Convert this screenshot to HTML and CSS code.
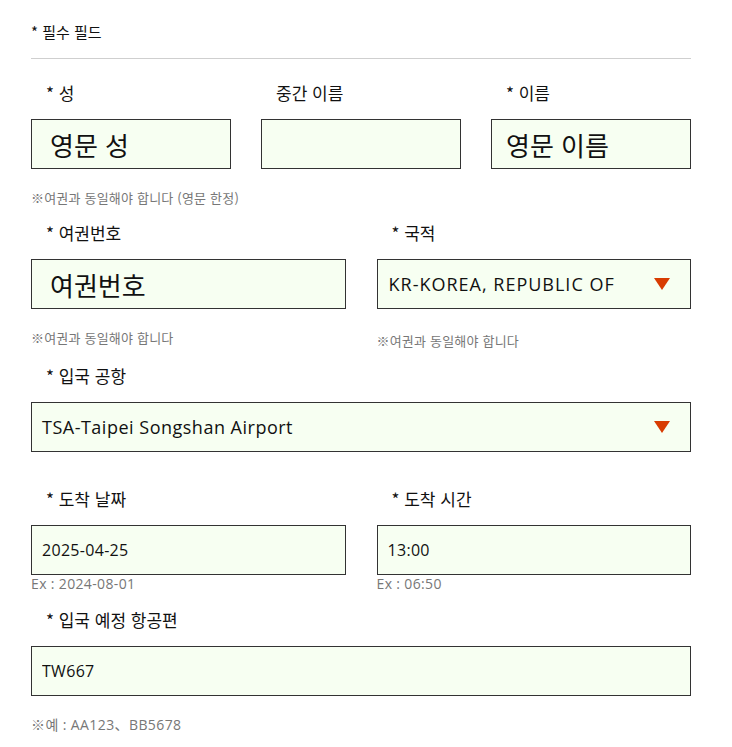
FILE: index.html
```html
<!DOCTYPE html>
<html lang="ko">
<head>
<meta charset="utf-8">
<link rel="stylesheet" href="styles.css">
</head>
<body>
<div class="form">
  <div class="required-note">* 필수 필드</div>
  <div class="divider"></div>

  <div class="row three">
    <div class="field">
      <div class="label">* 성</div>
      <input class="box big" type="text" placeholder="영문 성">
    </div>
    <div class="field">
      <div class="label">중간 이름</div>
      <input class="box big" type="text">
    </div>
    <div class="field">
      <div class="label">* 이름</div>
      <input class="box big tight" type="text" placeholder="영문 이름">
    </div>
  </div>
  <div class="hint">※여권과 동일해야 합니다 (영문 한정)</div>

  <div class="row two">
    <div class="field">
      <div class="label">* 여권번호</div>
      <input class="box big" type="text" placeholder="여권번호">
      <div class="hint">※여권과 동일해야 합니다</div>
    </div>
    <div class="field">
      <div class="label">* 국적</div>
      <div class="box select nat">
        <span>KR-KOREA, REPUBLIC OF</span>
        <svg class="arrow" width="16" height="12" viewBox="0 0 16 12"><path d="M0 0H16L8 12Z" fill="#d83c02"/></svg>
      </div>
      <div class="hint low">※여권과 동일해야 합니다</div>
    </div>
  </div>

  <div class="field">
    <div class="label">* 입국 공항</div>
    <div class="box select airport">
      <span>TSA-Taipei Songshan Airport</span>
      <svg class="arrow" width="16" height="12" viewBox="0 0 16 12"><path d="M0 0H16L8 12Z" fill="#d83c02"/></svg>
    </div>
  </div>

  <div class="row two spaced">
    <div class="field">
      <div class="label">* 도착 날짜</div>
      <input class="box small" type="text" value="2025-04-25">
      <div class="ex">Ex : 2024-08-01</div>
    </div>
    <div class="field">
      <div class="label">* 도착 시간</div>
      <input class="box small" type="text" value="13:00">
      <div class="ex">Ex : 06:50</div>
    </div>
  </div>

  <div class="field">
    <div class="label">* 입국 예정 항공편</div>
    <input class="box small" type="text" value="TW667">
    <div class="hint latin">※예 : AA123、BB5678</div>
  </div>
</div>
</body>
</html>
```

FILE: styles.css
```css
* { box-sizing: border-box; }
html, body { margin: 0; padding: 0; background: #fff; }
body {
  font-family: "Open Sans", "Noto Sans CJK KR", sans-serif;
  color: #111;
}
.form {
  width: 660px;
  margin-left: 31px;
  padding-top: 22px;
}
.required-note {
  font-family: "Noto Sans CJK KR", sans-serif;
  font-size: 15px;
  line-height: 20px;
  color: #111;
}
.divider {
  margin-top: 16px;
  height: 1px;
  background: #cfcfcf;
  margin-bottom: 22px;
}
.row { display: flex; align-items: flex-start; }
.row.three { gap: 30px; }
.row.three .field { width: 200px; }
.row.two { gap: 31px; }
.row.two .field { width: 315px; }
.row.spaced { margin-top: 35px; }
.field { display: flex; flex-direction: column; }
.label {
  font-family: "Noto Sans CJK KR", sans-serif;
  font-size: 17px;
  line-height: 24px;
  padding-left: 15px;
  margin-bottom: 14px;
  color: #111;
}
.box {
  display: block;
  width: 100%;
  height: 50px;
  margin: 0;
  border: 1px solid #333;
  background: #f7fff2;
  font: inherit;
  color: #111;
  outline: none;
}
.box.big {
  padding: 0 0 0 18px;
  font-family: "Noto Sans CJK KR", sans-serif;
  font-size: 26px;
}
.box.big.tight { padding-left: 14px; }
.box.big::placeholder { color: #111; opacity: 1; }
.box.small {
  padding: 0 0 0 10px;
  font-size: 16px;
  letter-spacing: 0.3px;
}
.select {
  display: flex;
  align-items: center;
  justify-content: space-between;
  padding: 0 20px 0 10px;
  font-size: 18px;
}
.select.nat { padding-left: 11px; letter-spacing: 1px; }
.select.airport { letter-spacing: 0.5px; }
.arrow { flex: none; }
.hint {
  font-family: "Noto Sans CJK KR", sans-serif;
  font-size: 13px;
  letter-spacing: 0.2px;
  line-height: 18px;
  color: #777;
  margin-top: 20px;
  margin-bottom: 14px;
}
.hint.low { margin-top: 23px; }
.hint.latin {
  font-family: "Open Sans", "Noto Sans CJK KR", sans-serif;
  font-size: 14px;
  letter-spacing: 0.4px;
}
.ex {
  font-size: 14px;
  letter-spacing: 0.35px;
  line-height: 18px;
  color: #777;
  margin-bottom: 15px;
}
```
